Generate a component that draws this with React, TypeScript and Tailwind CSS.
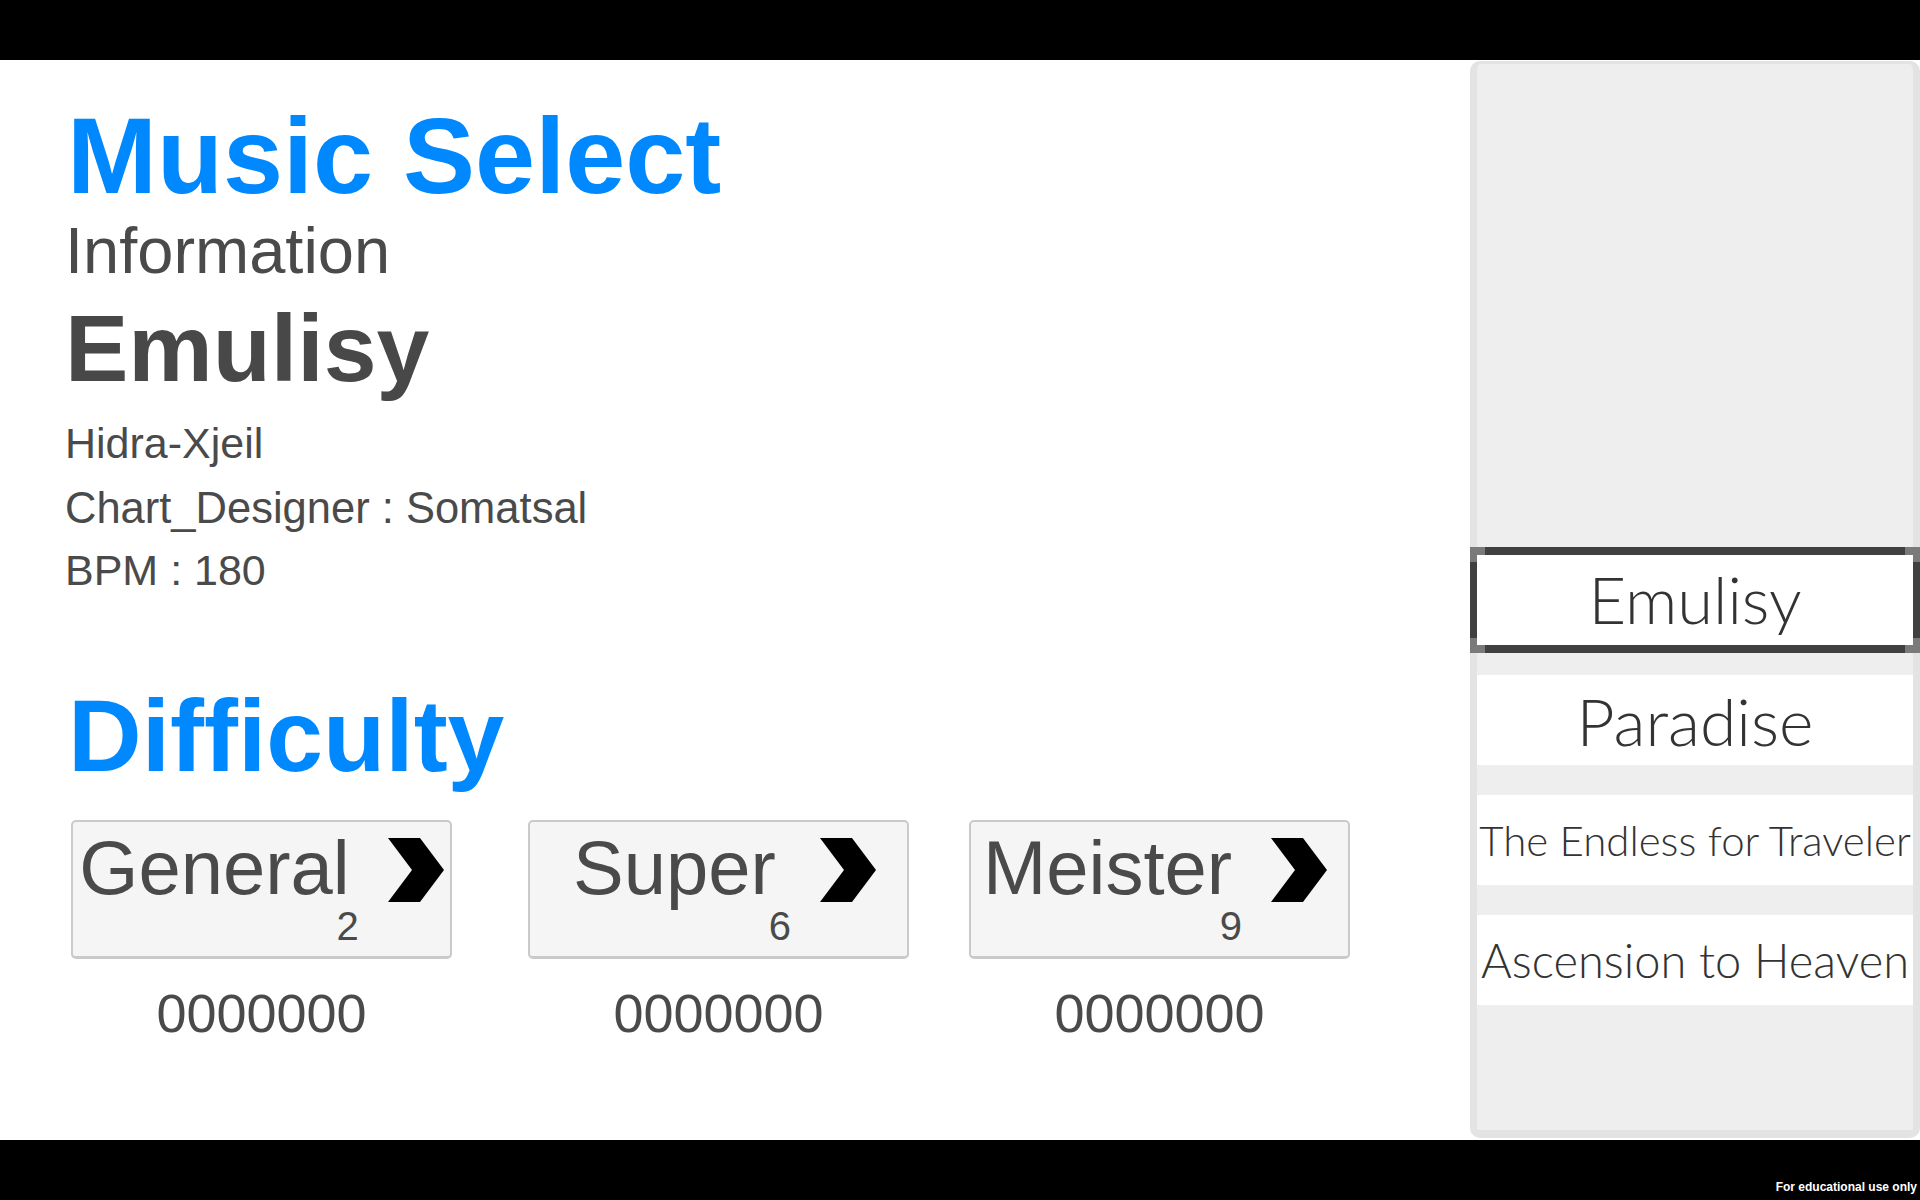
import React from 'react';

const difficulties = [
  { name: 'General', level: 2, score: '0000000', space: 'ml-[6px]', gap: 'ml-[38px]', nudge: '' },
  { name: 'Super', level: 6, score: '0000000', space: 'ml-[76px]', gap: 'ml-[44px]', nudge: 'ml-[12px]' },
  { name: 'Meister', level: 9, score: '0000000', space: 'ml-[60px]', gap: 'ml-[39px]', nudge: 'mr-[9px]' },
];

const songs = [
  { title: 'Emulisy', size: 'text-[65px]' },
  { title: 'Paradise', size: 'text-[66px]' },
  { title: 'The Endless for Traveler', size: 'text-[42px]' },
  { title: 'Ascension to Heaven', size: 'text-[47px]' },
];

function Chevron({ gap }: { gap: string }) {
  return (
    <svg width="56" height="64" viewBox="0 0 56 64" className={`mt-[8px] shrink-0 ${gap}`}>
      <polygon points="0,0 32,0 56,32 32,64 0,64 24,32" fill="#000" />
    </svg>
  );
}

function DifficultyButton({ name, level, gap, nudge }: { name: string; level: number; gap: string; nudge: string }) {
  return (
    <button className="w-[381px] h-[139px] bg-[#f5f5f5] border-2 border-b-[3px] border-[#cacaca] rounded-[5px] flex justify-center items-start pt-[8px]">
      <div className={`flex flex-col ${nudge}`}>
        <div className="flex items-start">
          <span className="text-[76px] leading-none">{name}</span>
          <Chevron gap={gap} />
        </div>
        <div className="flex justify-end pr-[85px] text-[40px] leading-none">{level}</div>
      </div>
    </button>
  );
}

function SongItem({ title, size, selected }: { title: string; size: string; selected: boolean }) {
  const label = (
    <div className={`h-[90px] bg-white flex items-center justify-center whitespace-nowrap overflow-hidden font-['Lato',sans-serif] font-light text-[#333] ${size}`}>
      {title}
    </div>
  );
  if (!selected) return label;
  return (
    <div className="relative -mx-[7px] -my-[8px] bg-[#404040] py-[8px] px-[7px]">
      <span className="absolute left-0 top-0 w-[15px] h-[15px] bg-[#7a7a7a]"></span>
      <span className="absolute right-0 top-0 w-[15px] h-[15px] bg-[#7a7a7a]"></span>
      <span className="absolute left-0 bottom-0 w-[15px] h-[15px] bg-[#7a7a7a]"></span>
      <span className="absolute right-0 bottom-0 w-[15px] h-[15px] bg-[#7a7a7a]"></span>
      <div className="relative">{label}</div>
    </div>
  );
}

export default function App() {
  return (
    <div className="w-[1920px] h-[1200px] bg-black flex flex-col overflow-hidden">
      <div className="h-[60px] shrink-0"></div>

      <main className="h-[1080px] bg-white flex shrink-0">
        {/* Left: song info + difficulty */}
        <section className="flex-1 pl-[65px] pt-[42px] font-['Liberation_Sans',Arial,sans-serif] text-[#4a4a4a]">
          <h1 className="pl-[2px] text-[108px] leading-none font-bold text-[#0088ff]">Music Select</h1>
          <h2 className="mt-[8px] text-[65px] leading-none">Information</h2>
          <h3 className="mt-[18px] text-[95px] leading-none font-bold text-[#484848]">Emulisy</h3>
          <p className="mt-[26px] text-[43px] leading-[43px]">Hidra-Xjeil</p>
          <p className="mt-[22px] text-[43.5px] leading-[43px]">Chart_Designer : Somatsal</p>
          <p className="mt-[19px] text-[43px] leading-[43px]">BPM : 180</p>

          <h1 className="mt-[93px] pl-[3px] text-[102px] leading-none font-bold text-[#0088ff]">Difficulty</h1>

          <div className="flex mt-[33px]">
            {difficulties.map((d) => (
              <div key={d.name} className={`flex flex-col items-center ${d.space}`}>
                <DifficultyButton name={d.name} level={d.level} gap={d.gap} nudge={d.nudge} />
                <div className="mt-[27px] text-[54px] leading-none">{d.score}</div>
              </div>
            ))}
          </div>
        </section>

        {/* Right: song list */}
        <aside className="w-[450px] mt-[1px] mb-[2px] bg-[#eeeeee] border-x-[7px] border-t-[3px] border-b-[8px] border-[#e3e3e3] rounded-[10px] flex flex-col gap-[30px] pt-[491px]">
          {songs.map((s, i) => (
            <SongItem key={s.title} title={s.title} size={s.size} selected={i === 0} />
          ))}
        </aside>
      </main>

      <footer className="flex-1 flex items-end justify-end pr-[3px] pb-[7px]">
        <span className="text-white text-[12px] leading-[12px] font-bold font-['Liberation_Sans',Arial,sans-serif]">
          For educational use only
        </span>
      </footer>
    </div>
  );
}
